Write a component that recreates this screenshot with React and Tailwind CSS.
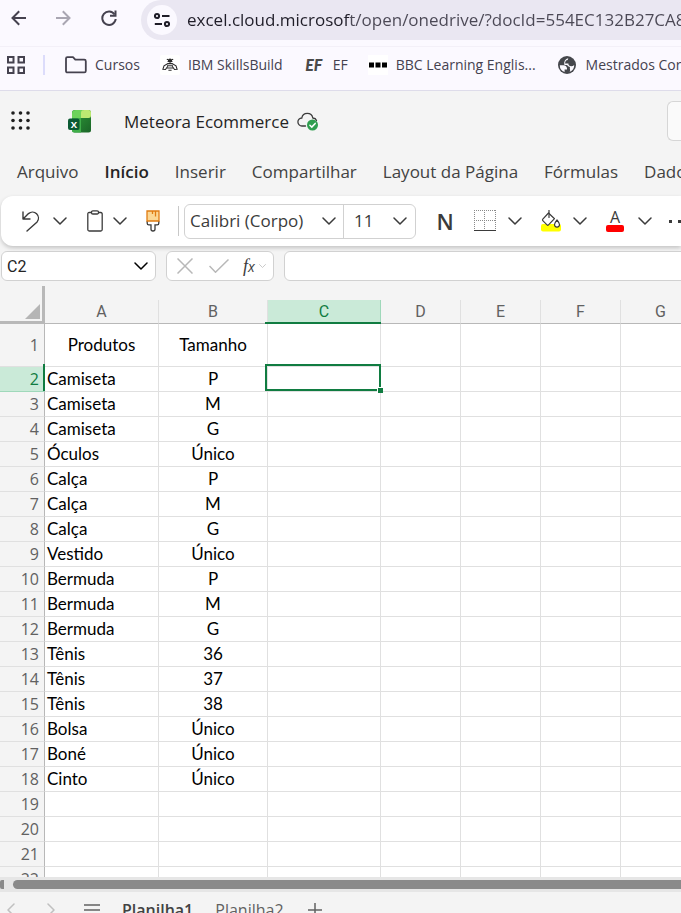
import React, { useState } from "react";

// --- DATA ---
const menuTabs = [
  "Arquivo",
  "Início",
  "Inserir",
  "Compartilhar",
  "Layout da Página",
  "Fórmulas",
  "Dados",
];

const columns = ["A", "B", "C", "D", "E", "F", "G"];

const sheetRows = [
  ["Produtos", "Tamanho"],
  ["Camiseta", "P"],
  ["Camiseta", "M"],
  ["Camiseta", "G"],
  ["Óculos", "Único"],
  ["Calça", "P"],
  ["Calça", "M"],
  ["Calça", "G"],
  ["Vestido", "Único"],
  ["Bermuda", "P"],
  ["Bermuda", "M"],
  ["Bermuda", "G"],
  ["Tênis", "36"],
  ["Tênis", "37"],
  ["Tênis", "38"],
  ["Bolsa", "Único"],
  ["Boné", "Único"],
  ["Cinto", "Único"],
  [],
  [],
  [],
  [],
];

// --- ICONS ---
const Chevron = ({ className = "w-3.5" }) => (
  <svg
    viewBox="0 0 14 8"
    className={`shrink-0 ${className}`}
    fill="none"
    stroke="currentColor"
    strokeWidth="1.5"
    strokeLinecap="round"
    strokeLinejoin="round"
  >
    <path d="M1 1l6 6 6-6" />
  </svg>
);

const ArrowIcon = ({ flip }) => (
  <svg
    viewBox="0 0 16 16"
    className={`size-4 ${flip ? "-scale-x-100" : ""}`}
    fill="none"
    stroke="currentColor"
    strokeWidth="2"
  >
    <path d="M15 8H2M8.2 1.3L1.5 8l6.7 6.7" />
  </svg>
);

const ReloadIcon = () => (
  <svg viewBox="0 0 16 16" className="size-4" fill="none" stroke="currentColor" strokeWidth="2">
    <path d="M13.6 4.5A6.7 6.7 0 1 0 14.7 9" />
    <path d="M14.5 0.5v5.3H9" />
  </svg>
);

const TuneIcon = () => (
  <svg viewBox="0 0 16 16" className="size-4" fill="none" stroke="currentColor" strokeWidth="2">
    <circle cx="3" cy="4" r="2.1" />
    <path d="M8 4h7.5M0.8 12H8" />
    <circle cx="13" cy="12" r="2.1" />
  </svg>
);

const AppsIcon = () => (
  <svg viewBox="0 0 18 18" className="w-4.5" fill="none" stroke="currentColor" strokeWidth="2">
    <path d="M1 1h5.5v5.5H1zM11.5 1H17v5.5h-5.5zM1 11.5h5.5V17H1zM11.5 11.5H17V17h-5.5z" />
  </svg>
);

const FolderIcon = () => (
  <svg viewBox="0 0 22 18" className="w-5.5" fill="none" stroke="currentColor" strokeWidth="1.8" strokeLinejoin="round">
    <path d="M1 2.6Q1 1.2 2.4 1.2H8l2.3 2.5h9q1.5 0 1.5 1.5v9.7q0 1.5-1.5 1.5H2.5Q1 16.4 1 14.9z" />
  </svg>
);

const BeeIcon = () => (
  <svg viewBox="0 0 20 20" className="size-5 rounded-xs bg-white" fill="none" stroke="#2b2b2b" strokeWidth="1.1">
    <path d="M7.6 6.5h4.8M8.3 4.8L6.8 4.2M11.7 4.8l1.5-.6" />
    <circle cx="10" cy="5.6" r="1.5" fill="#2b2b2b" />
    <path d="M8 8.500L4 10.8 2.900 14.300l2.600.2 2.300-3.300M12 8.500l4 2.300 1.100 3.500-2.600.2-2.300-3.300" />
    <path d="M7.600 8.600h4.800M7 10.800h6M7 13h6M8.400 15.200h3.200" />
  </svg>
);

const BbcIcon = () => (
  <svg viewBox="0 0 20 20" className="size-5 bg-white" fill="#000">
    <path d="M1 7.5h5v5H1zM7.5 7.5h5v5h-5zM14 7.5h5v5h-5z" />
  </svg>
);

const GlobeIcon = () => (
  <svg viewBox="0 0 22 22" className="size-5.5">
    <circle cx="11" cy="11" r="9" fill="#45474c" />
    <path
      d="M3.800 11.200h3.700q3.300.2 3.500 3.400v.9H8.600v2.600A7.300 7.300 0 0 1 3.800 11.200z"
      fill="#fbf9ff"
    />
    <path
      d="M12.600 4q-.9.600-.8 1.900-2.800.3-2.700 3.700h3.300q0 2.600 2.900 2.600 1.600 0 2.900-1.200Q18.400 16 13.500 18q1-1 .5-2.600-.4-1.500 0-2.300-2.400-.9-2.900-2.200H8.400Q7.200 5.400 12.600 4z"
      fill="#fbf9ff"
    />
  </svg>
);

const WaffleIcon = () => (
  <svg viewBox="0 0 20 20" className="size-5" fill="#1f1f1f">
    {[2, 9.5, 17].map((y) =>
      [2, 9.5, 17].map((x) => <circle key={`${x}-${y}`} cx={x} cy={y} r="1.8" />)
    )}
  </svg>
);

const ExcelLogo = () => (
  <svg viewBox="0 0 24 24" className="size-6">
    <defs>
      <linearGradient id="xlBase" x1="0" y1="0" x2="1" y2="1">
        <stop offset="0" stopColor="#2f9e3a" />
        <stop offset="1" stopColor="#1a6427" />
      </linearGradient>
    </defs>
    <rect x="4" y="1" width="19" height="22.5" rx="2.5" fill="url(#xlBase)" />
    <path d="M4 9V5a4 4 0 0 1 4-4h7v8z" fill="#6dd35c" />
    <path d="M13 9V4a3 3 0 0 1 3-3h4.5A2.5 2.5 0 0 1 23 3.5v3A2.5 2.5 0 0 1 20.5 9z" fill="#bdea72" />
    <path d="M4 9h9v14.5H6.5A2.5 2.5 0 0 1 4 21z" fill="#3fae49" />
    <rect x="0" y="9.5" width="11.5" height="11.5" rx="2" fill="#0b5a33" />
    <text x="5.8" y="18.6" textAnchor="middle" fontFamily="Open Sans, sans-serif" fontWeight="700" fontSize="9.5" fill="#fff">
      X
    </text>
  </svg>
);

const CloudSavedIcon = () => (
  <svg viewBox="0 0 22 20" className="w-5.5" fill="none" stroke="#3b3b3b" strokeWidth="1.3" strokeLinecap="round">
    <path d="M8.5 15H5a4 4 0 0 1-.2-8A5.6 5.600 0 0 1 15.8 7Q18.7 7.2 19.5 9.5" />
    <circle cx="15.5" cy="14" r="5.5" fill="#2f9e4f" stroke="none" />
    <path d="M12.9 14.2l1.9 1.9 3.4-3.7" stroke="#fff" strokeWidth="1.5" />
  </svg>
);

const UndoIcon = () => (
  <svg viewBox="0 0 20 22" className="w-5" fill="none" stroke="#3b3b3b" strokeWidth="1.4" strokeLinecap="round" strokeLinejoin="round">
    <path d="M2 2v7h7M2.3 8.7L7.5 3.6a6 6 0 0 1 8.6 8.3L6 21" />
  </svg>
);

const ClipboardIcon = () => (
  <svg viewBox="0 0 16 22" className="w-4" fill="none" stroke="#3b3b3b" strokeWidth="1.3">
    <path d="M4.5 2.5H2.2Q0.8 2.5 0.8 4v15.5q0 1.5 1.4 1.5h11.6q1.4 0 1.4-1.5V4q0-1.5-1.4-1.5h-2.3" />
    <rect x="4.5" y="0.8" width="7" height="3.2" rx="1.3" />
  </svg>
);

const BrushIcon = () => (
  <svg viewBox="0 0 14 22" className="w-3.5" fill="none" strokeWidth="1.3">
    <path d="M1.2 11v2.2q0 1.6 1.6 1.6H5v4.4q0 1.800 2 1.800t2-1.800v-4.400h2.200q1.600 0 1.600-1.600V11" stroke="#3b3b3b" fill="#fff" />
    <path d="M1 1h12v10H1z" fill="#fbd795" stroke="#e07c12" />
    <path d="M9.5 1v5.5M6.5 1v3" stroke="#e07c12" />
  </svg>
);

const BordersIcon = () => (
  <svg viewBox="0 0 22 22" className="size-5.5" fill="none" stroke="#8a8a8a" strokeWidth="1">
    <path d="M0 0.5h22M0 10.5h22M0.5 0v19M10.5 0v19M21.5 0v19" strokeDasharray="1 1" />
    <path d="M0 20.5h22" stroke="#3b3b3b" />
  </svg>
);

const FillIcon = () => (
  <svg viewBox="0 0 20 22" className="w-5" fill="none" stroke="#3b3b3b" strokeWidth="1.2" strokeLinejoin="round">
    <rect x="0" y="14" width="20" height="7.5" rx="2" fill="#ffff00" stroke="none" />
    <path d="M7.5 3L1.8 9.2q-.7.8 0 1.5l4.2 4.2q.8.7 1.500 0l6-6.200z" fill="#fff" />
    <path d="M8 7.5V0.5" strokeLinecap="round" />
    <path d="M16 10q-2.500 3-2.500 4.600a2.500 2.500 0 0 0 5 0Q18.500 13 16 10z" fill="#fff" />
  </svg>
);

const BookmarkLink = ({ icon, label }) => (
  <a href="#" className="flex shrink-0 items-center gap-2">
    {icon}
    <span className="whitespace-nowrap">{label}</span>
  </a>
);

// --- SECTIONS ---
const BrowserBar = () => (
  <div className="shrink-0 border-b border-[#dedcea] bg-[#fbf9ff] text-[#45424f]">
    <div className="flex h-[47px] items-start border-b border-[#f3f0f8] pl-[11px]">
      <div className="flex h-9 shrink-0 items-center gap-7">
        <button type="button" aria-label="Voltar"><ArrowIcon /></button>
        <button type="button" aria-label="Avançar" className="text-[#a9a6b2]"><ArrowIcon flip /></button>
        <button type="button" aria-label="Recarregar" className="pl-0.5"><ReloadIcon /></button>
      </div>
      <div className="ml-6 flex h-10 flex-1 items-center rounded-l-full bg-[#eae7f2] pl-1.5">
        <button
          type="button"
          aria-label="Informações do site"
          className="flex size-[30px] shrink-0 items-center justify-center rounded-full bg-[#fbf9ff] text-[#1f1d28]"
        >
          <TuneIcon />
        </button>
        {/* host part is darker than the path */}
        <input
          type="text"
          aria-label="Endereço"
          defaultValue="excel.cloud.microsoft/open/onedrive/?docId=554EC132B27CA81"
          className="ml-2.5 w-[520px] shrink-0 bg-[linear-gradient(to_right,#1f1d28_163px,#4b4855_163px)] bg-clip-text text-[17px] text-transparent outline-none"
        />
      </div>
    </div>
    <nav aria-label="Favoritos" className="flex h-[43px] items-start overflow-hidden pl-[7px] text-sm">
      <div className="flex h-9 items-center">
        <button type="button" aria-label="Guias"><AppsIcon /></button>
        <div className="ml-[18px] h-5 w-0.5 shrink-0 bg-[#dcdcfb]" />
        <div className="ml-5 flex items-center gap-5">
          <BookmarkLink icon={<FolderIcon />} label="Cursos" />
          <BookmarkLink icon={<BeeIcon />} label="IBM SkillsBuild" />
          <BookmarkLink
            icon={
              <span
                className="w-[22px] text-center text-base leading-5 font-black text-[#4a4a4a] italic"
                style={{ fontFamily: "Lato, sans-serif" }}
              >
                EF
              </span>
            }
            label="EF"
          />
          <BookmarkLink icon={<BbcIcon />} label="BBC Learning Englis..." />
          <BookmarkLink icon={<GlobeIcon />} label="Mestrados Cor" />
        </div>
      </div>
    </nav>
  </div>
);

const TitleBar = () => (
  <header className="flex h-[60px] shrink-0 items-center overflow-hidden pl-[11px]">
    <button type="button" aria-label="Inicializador de aplicativos"><WaffleIcon /></button>
    <div className="ml-[37px]"><ExcelLogo /></div>
    <h1 className="ml-8 pt-0.5 text-[17px] whitespace-nowrap text-[#242424]">Meteora Ecommerce</h1>
    <div className="ml-2"><CloudSavedIcon /></div>
    <div className="flex flex-1 justify-end">
      <button
        type="button"
        aria-label="Pesquisar"
        className="h-10 w-3.5 rounded-l-md border border-r-0 border-[#d6d6d6] bg-[#fafafa]"
      />
    </div>
  </header>
);

const MenuTabs = ({ active, onSelect }) => (
  <nav className="flex h-[45px] shrink-0 items-center gap-[26px] overflow-hidden pb-1 pl-[17px] text-[17px] text-[#424242]">
    {menuTabs.map((tab) => (
      <button
        key={tab}
        type="button"
        onClick={() => onSelect(tab)}
        className={`shrink-0 whitespace-nowrap ${active === tab ? "font-semibold text-[#242424]" : ""}`}
      >
        {tab}
      </button>
    ))}
  </nav>
);

const Ribbon = () => (
  <div className="ml-px flex h-[50px] shrink-0 items-center overflow-hidden rounded-l-xl bg-white pl-5 text-[#3b3b3b] shadow-[0_2px_4px_rgba(0,0,0,0.2)]">
    <button type="button" aria-label="Desfazer"><UndoIcon /></button>
    <button type="button" aria-label="Opções de desfazer" className="ml-3"><Chevron /></button>
    <button type="button" aria-label="Colar" className="ml-5"><ClipboardIcon /></button>
    <button type="button" aria-label="Opções de colar" className="ml-2.5"><Chevron /></button>
    <button type="button" aria-label="Pincel de formatação" className="ml-[19px]"><BrushIcon /></button>
    <div className="ml-[18px] h-[30px] w-px shrink-0 bg-[#c8c8c8]" />
    <div className="ml-[5px] flex h-[35px] shrink-0 rounded-md border border-[#d1d1d1] text-[17px]">
      <label className="relative flex w-[159px] items-center border-r border-[#d1d1d1]">
        <select aria-label="Fonte" className="w-full appearance-none pl-[5px] outline-none">
          <option>Calibri (Corpo)</option>
        </select>
        <Chevron className="pointer-events-none absolute right-[7px] w-3.5" />
      </label>
      <label className="relative flex w-[71px] items-center">
        <select aria-label="Tamanho da fonte" className="w-full appearance-none pl-2.5 outline-none">
          <option>11</option>
        </select>
        <Chevron className="pointer-events-none absolute right-2 w-3.5" />
      </label>
    </div>
    <button type="button" aria-label="Negrito" className="ml-5 w-[18px] shrink-0 text-[22px] leading-6 font-semibold">N</button>
    <button type="button" aria-label="Bordas" className="ml-5 shrink-0"><BordersIcon /></button>
    <button type="button" aria-label="Opções de bordas" className="ml-3"><Chevron /></button>
    <button type="button" aria-label="Cor de preenchimento" className="ml-[19px] shrink-0"><FillIcon /></button>
    <button type="button" aria-label="Opções de preenchimento" className="ml-3"><Chevron /></button>
    <button type="button" aria-label="Cor da fonte" className="ml-[19px] flex w-[18px] shrink-0 flex-col items-center gap-px">
      <span className="text-base leading-[14px]">A</span>
      <span className="h-[7px] w-full rounded-xs bg-[#ff0000]" />
    </button>
    <button type="button" aria-label="Opções de cor da fonte" className="ml-3.5"><Chevron /></button>
    <button type="button" aria-label="Mais opções" className="ml-[17px] flex shrink-0 gap-1.5">
      <span className="size-[3px] bg-[#3b3b3b]" />
      <span className="size-[3px] bg-[#3b3b3b]" />
      <span className="size-[3px] bg-[#3b3b3b]" />
    </button>
  </div>
);

const FormulaBar = () => (
  <div className="mt-[5px] flex h-[30px] shrink-0 gap-2.5 overflow-hidden pl-px">
    <div className="flex w-[155px] shrink-0 items-center rounded-md border border-[#d1d1d1] bg-white pr-[7px] pl-[5px]">
      <input
        type="text"
        aria-label="Caixa de nome"
        defaultValue="C2"
        className="w-full min-w-0 pt-0.5 text-base text-[#242424] outline-none"
        style={{ fontFamily: "Roboto, sans-serif" }}
      />
      <button type="button" aria-label="Abrir caixa de nome"><Chevron /></button>
    </div>
    <div className="flex w-[108px] shrink-0 items-center rounded-md border border-[#d1d1d1] bg-white pl-2.5 text-[#b8b8b8]">
      <button type="button" aria-label="Cancelar">
        <svg viewBox="0 0 16 16" className="size-4" fill="none" stroke="currentColor" strokeWidth="1.5">
          <path d="M0.5 0.5l15 15M15.5 0.5l-15 15" />
        </svg>
      </button>
      <button type="button" aria-label="Inserir" className="ml-4">
        <svg viewBox="0 0 20 14" className="w-5" fill="none" stroke="currentColor" strokeWidth="1.5">
          <path d="M0.5 7l6 6.2L19.5 0.5" />
        </svg>
      </button>
      <button
        type="button"
        aria-label="Inserir função"
        className="ml-3.5 flex items-baseline text-[#3b3b3b] italic"
      >
        <span className="text-lg leading-5" style={{ fontFamily: "Liberation Serif, serif" }}>f</span>
        <span className="text-sm leading-5">x</span>
      </button>
      <button type="button" aria-label="Opções de função" className="ml-1"><Chevron className="w-[7px]" /></button>
    </div>
    <input
      type="text"
      aria-label="Barra de fórmulas"
      className="-mr-2 min-w-0 flex-1 rounded-md border border-[#d1d1d1] bg-white px-2 outline-none"
    />
  </div>
);

const Sheet = () => (
  <main className="mt-[5px] min-h-0 flex-1 overflow-hidden">
    <table className="w-[701px] table-fixed border-separate border-spacing-0 bg-white">
      <colgroup>
        <col className="w-[45px]" />
        <col className="w-[114px]" />
        <col className="w-[109px]" />
        <col className="w-[113px]" />
        <col className="w-20" />
        <col className="w-20" />
        <col className="w-20" />
        <col className="w-20" />
      </colgroup>
      <thead className="text-base" style={{ fontFamily: "Roboto, sans-serif" }}>
        <tr className="h-[38px] bg-[#f4f4f4] text-[#616161]">
          <th aria-label="Selecionar tudo" className="border-r-3 border-b-3 border-[#b8b8b8] p-0 align-bottom">
            <svg viewBox="0 0 15 15" className="mr-0.5 mb-0.5 ml-auto w-[15px]" fill="#b5b5b5">
              <path d="M15 0v15H0z" />
            </svg>
          </th>
          {columns.map((col) => (
            <th key={col} scope="col" className="p-0 align-bottom font-normal">
              <div
                className={`relative flex h-6 items-center justify-center border-r border-b border-b-[#b8b8b8] ${
                  col === "C" ? "border-r-[#9fd8ba] bg-[#caead8] text-[#107c41]" : "border-r-[#e0e0e0]"
                }`}
              >
                {col}
                {col === "C" && (
                  <span className="absolute -right-px -bottom-px -left-[3px] h-0.5 bg-[#107c41]" />
                )}
              </div>
            </th>
          ))}
        </tr>
      </thead>
      <tbody className="text-[17px]" style={{ fontFamily: "Lato, sans-serif" }}>
        {sheetRows.map((row, r) => (
          <tr key={r} className={r === 0 ? "h-[43px]" : "h-[25px]"}>
            <th
              scope="row"
              className={`relative border-r border-b p-0 pr-[5px] text-right text-base leading-6 font-normal ${
                r === 1
                  ? "border-r-[#b8b8b8] border-b-[#9fd8ba] bg-[#caead8] text-[#107c41]"
                  : "border-r-[#b8b8b8] border-b-[#e0e0e0] bg-[#f4f4f4] text-[#616161]"
              }`}
              style={{ fontFamily: "'Open Sans', sans-serif" }}
            >
              {r + 1}
              {r === 1 && <span className="absolute -top-[3px] -right-px bottom-0 w-0.5 bg-[#107c41]" />}
            </th>
            {columns.map((col, c) => (
              <td
                key={col}
                className={`relative border-r border-b border-[#e0e0e0] p-0 leading-6 whitespace-nowrap text-black ${
                  c === 0 && r > 0 ? "pl-0.5 text-left" : "text-center"
                }`}
              >
                {row[c]}
                {r === 1 && col === "C" && (
                  <div className="absolute -top-[3px] -right-px bottom-0 -left-[3px] z-10 border-2 border-[#107c41]">
                    <span className="absolute -right-1 -bottom-1 size-1.5 border-t border-l border-white bg-[#107c41]" />
                  </div>
                )}
              </td>
            ))}
          </tr>
        ))}
      </tbody>
    </table>
  </main>
);

const SheetTabs = () => (
  <footer className="shrink-0">
    <div className="flex h-[15px] items-center overflow-hidden bg-[#e6e6e6]">
      <div className="h-[9px] w-1 rounded-l-xs bg-[#8a8a8a]" />
      <div className="ml-[9px] h-[9px] flex-1 rounded-l-full bg-[#8a8a8a]" />
    </div>
    <div className="h-[21px] overflow-hidden">
      <div className="flex h-9 items-center pl-1 text-base text-[#616161]">
        <button type="button" aria-label="Planilha anterior" className="text-[#c0c0c0]">
          <Chevron className="w-3.5 rotate-90" />
        </button>
        <button type="button" aria-label="Próxima planilha" className="ml-[26px] text-[#c0c0c0]">
          <Chevron className="w-3.5 -rotate-90" />
        </button>
        <button type="button" aria-label="Todas as planilhas" className="ml-[26px]">
          <svg viewBox="0 0 16 12" className="w-4" stroke="#616161" strokeWidth="1.5">
            <path d="M0 1h16M0 6h16M0 11h16" />
          </svg>
        </button>
        <button type="button" className="ml-[22px] font-semibold text-[#424242]">Planilha1</button>
        <button type="button" className="ml-[22px]">Planilha2</button>
        <button type="button" aria-label="Nova planilha" className="ml-6">
          <svg viewBox="0 0 14 14" className="w-3.5" stroke="#616161" strokeWidth="1.5">
            <path d="M7 0v14M0 7h14" />
          </svg>
        </button>
      </div>
    </div>
  </footer>
);

const App = () => {
  const [activeTab, setActiveTab] = useState("Início");

  return (
    <div
      className="flex h-screen flex-col overflow-hidden bg-[#f4f4f4]"
      style={{ fontFamily: "'Open Sans', sans-serif" }}
    >
      <BrowserBar />
      <TitleBar />
      <MenuTabs active={activeTab} onSelect={setActiveTab} />
      <Ribbon />
      <FormulaBar />
      <Sheet />
      <SheetTabs />
    </div>
  );
};

export default App;
